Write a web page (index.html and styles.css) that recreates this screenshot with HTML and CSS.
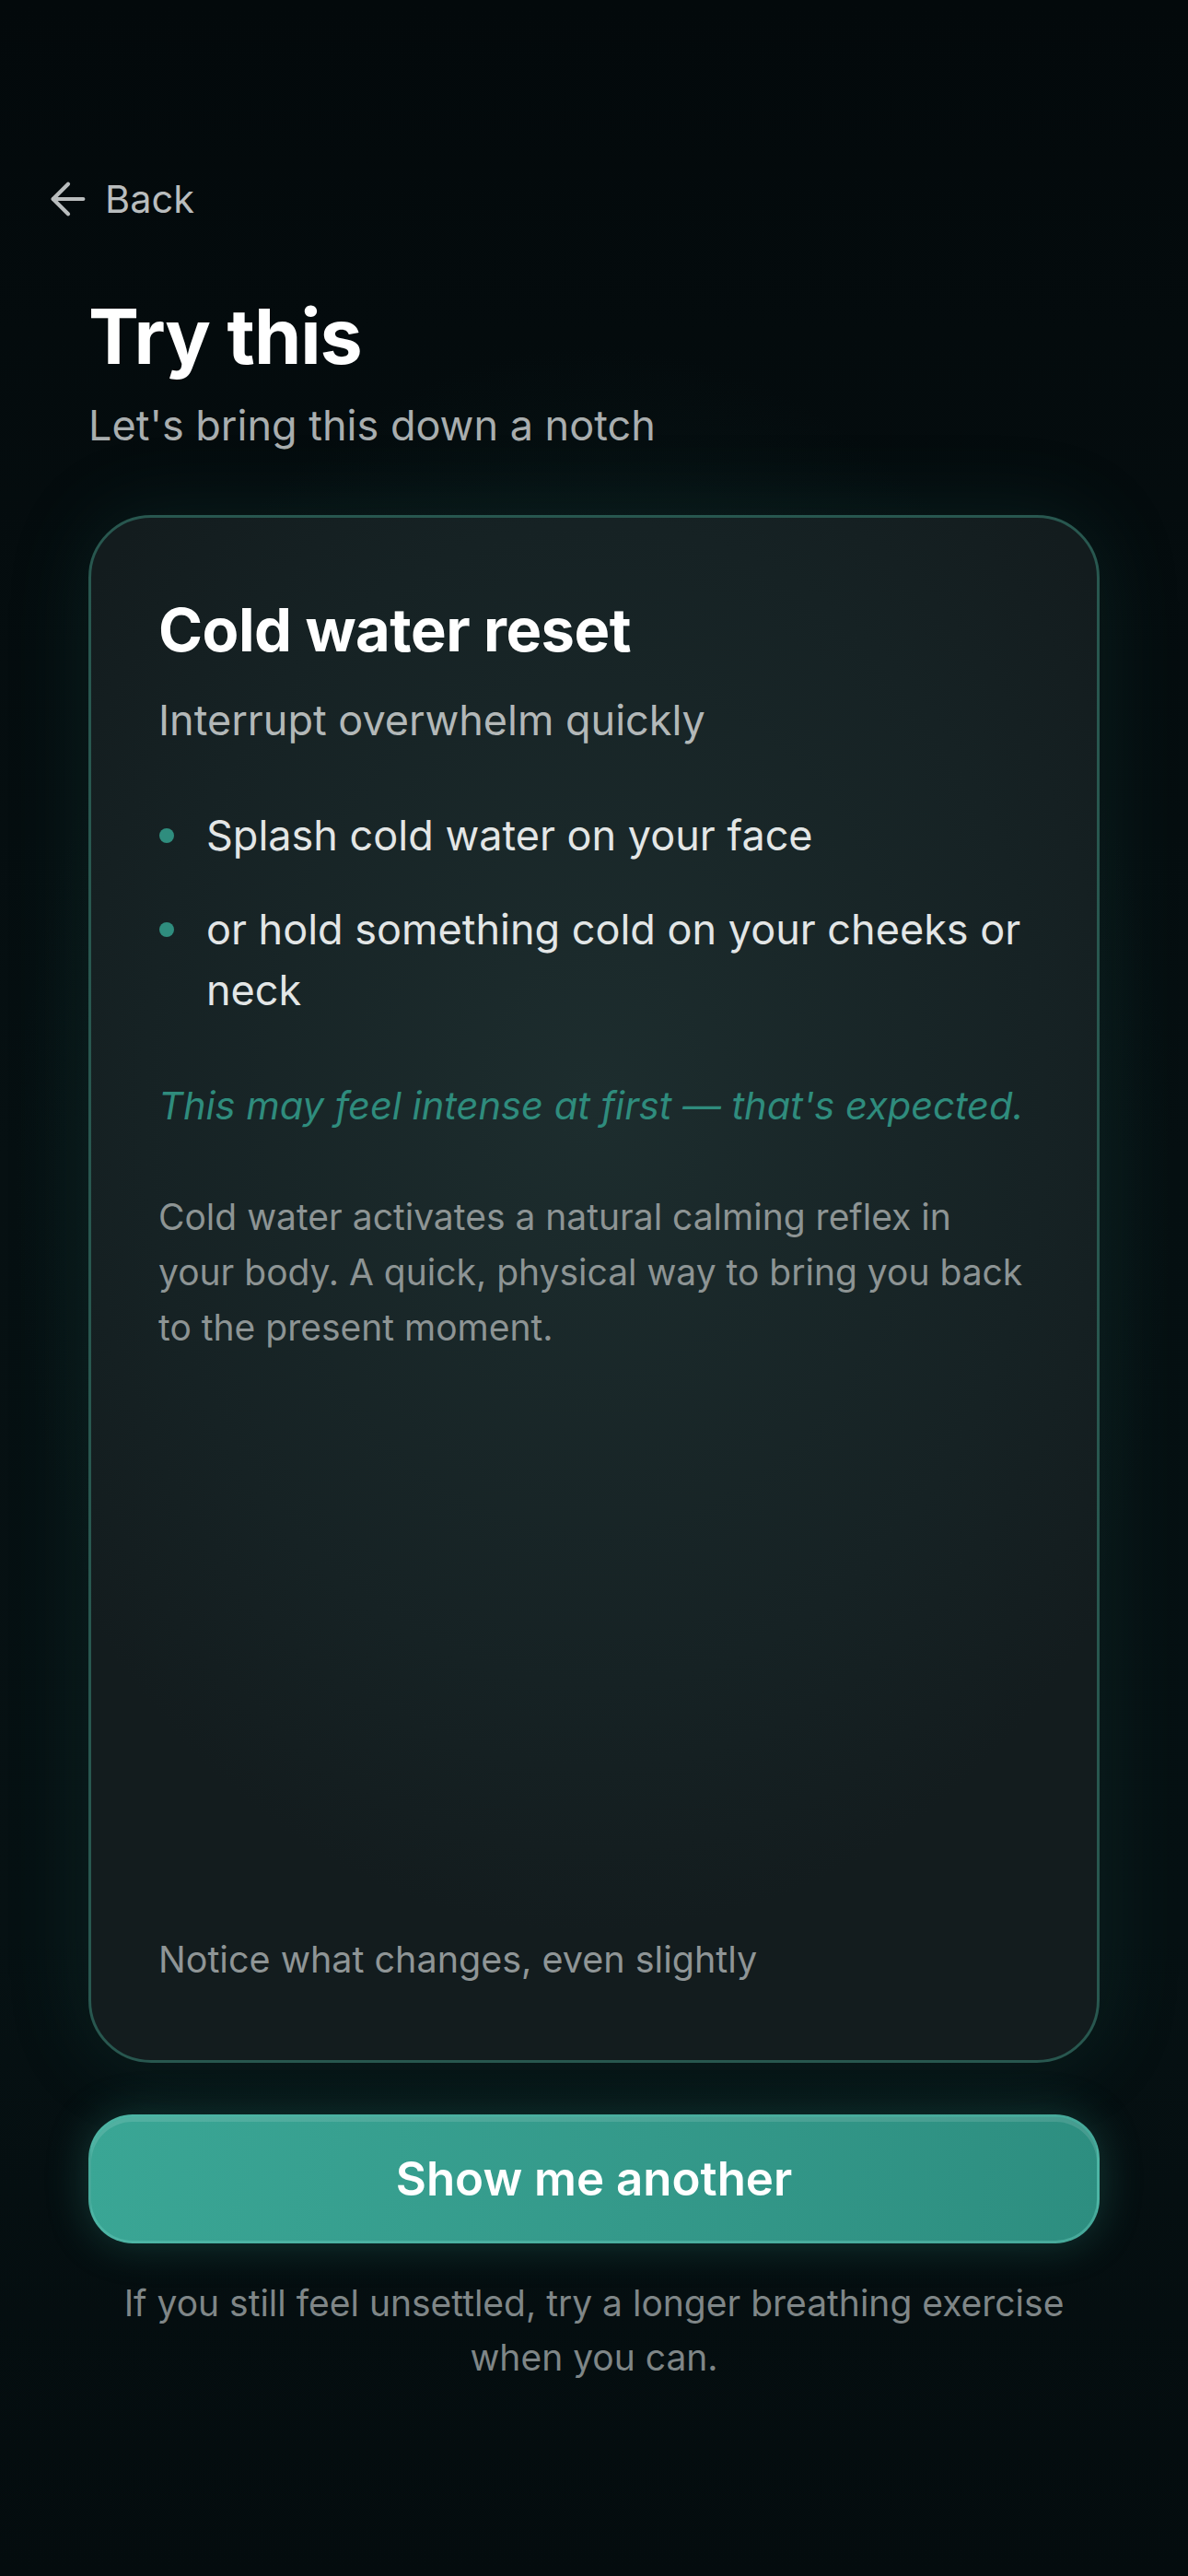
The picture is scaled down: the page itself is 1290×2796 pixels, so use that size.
FILE: index.html
```html
<!DOCTYPE html>
<html lang="en">
<head>
    <meta charset="utf-8">
    <title>Try this</title>
    <link rel="stylesheet" href="styles.css">
</head>
<body>

<div class="screen">
    <a class="back" href="#">
        <svg class="back-icon" viewBox="0 0 24 24" fill="none" stroke="currentColor" stroke-width="1.8" stroke-linecap="round" stroke-linejoin="round">
            <path d="M19 12H5"/>
            <path d="M12 19l-7-7 7-7"/>
        </svg>
        <span>Back</span>
    </a>

    <main class="content">
        <h1 class="title">Try this</h1>
        <p class="subtitle">Let's bring this down a notch</p>

        <section class="card">
            <h2 class="card-title">Cold water reset</h2>
            <p class="card-sub">Interrupt overwhelm quickly</p>

            <ul class="steps">
                <li>Splash cold water on your face</li>
                <li>or hold something cold on your cheeks or neck</li>
            </ul>

            <p class="note">This may feel intense at first — that's expected.</p>

            <p class="why">Cold water activates a natural calming reflex in your body. A quick, physical way to bring you back to the present moment.</p>

            <p class="notice">Notice what changes, even slightly</p>
        </section>

        <button class="another">Show me another</button>

        <p class="hint">If you still feel unsettled, try a longer breathing exercise when you can.</p>
    </main>
</div>

</body>
</html>
```

FILE: styles.css
```css
* {
    box-sizing: border-box;
}
html, body {
    margin: 0;
    padding: 0;
}
body {
    min-height: 2796px;
    background:
        radial-gradient(ellipse 900px 1300px at 50% 46%, rgba(24, 60, 58, 0.55), rgba(10, 24, 26, 0) 70%),
        linear-gradient(180deg, #03090b 0%, #061012 45%, #061113 75%, #040c0e 100%);
    font-family: Inter, 'Noto Sans', sans-serif;
    color: #fff;
}
.screen {
    padding-top: 190px;
}
.back {
    display: flex;
    align-items: center;
    gap: 12px;
    padding-left: 46px;
    height: 52px;
    color: #b9bdbe;
    text-decoration: none;
    font-size: 41.5px;
    line-height: 52px;
}
.back-icon {
    width: 56px;
    height: 56px;
}
.content {
    display: flex;
    flex-direction: column;
    padding: 0 96px;
}
.title {
    margin: 73px 0 0;
    font-size: 82.5px;
    font-weight: 700;
    line-height: 101px;
    letter-spacing: -1px;
}
.subtitle {
    margin: 17px 0 0;
    font-size: 45px;
    line-height: 57px;
    color: #a9aeaf;
}
.card {
    display: flex;
    flex-direction: column;
    height: 1680px;
    margin-top: 69px;
    padding: 83px 69px 81px 73px;
    border: 3px solid #28574f;
    border-radius: 68px;
    background:
        radial-gradient(ellipse 700px 900px at 50% 38%, #1d2d2e, #162224 70%, #131c1e 100%);
    box-shadow: 0 0 90px rgba(40, 120, 108, 0.17);
}
.card-title {
    margin: 0;
    font-size: 65px;
    font-weight: 700;
    line-height: 77px;
    letter-spacing: -0.5px;
}
.card-sub {
    margin: 33px 0 0;
    font-size: 45px;
    line-height: 54px;
    color: #b3b8b8;
}
.steps {
    list-style: none;
    margin: 65px 0 0;
    padding: 0;
    display: flex;
    flex-direction: column;
    gap: 36px;
}
.steps li {
    position: relative;
    padding-left: 52px;
    font-size: 45px;
    line-height: 66px;
    color: #e3e6e6;
}
.steps li::before {
    content: "";
    position: absolute;
    left: 1px;
    top: 25px;
    width: 16px;
    height: 16px;
    border-radius: 50%;
    background: #2f8d7e;
}
.note {
    margin: 63px 0 0;
    font-size: 41.6px;
    font-style: italic;
    line-height: 58px;
    color: #2f8c7d;
    white-space: nowrap;
}
.why {
    margin: 62px 0 0;
    font-size: 39px;
    line-height: 60px;
    color: #8d9494;
}
.notice {
    margin: auto 0 0;
    font-size: 39.5px;
    line-height: 55px;
    color: #8f9596;
}
.another {
    height: 140px;
    margin-top: 56px;
    border: 3px solid rgba(96, 196, 180, 0.5);
    border-radius: 48px;
    background: linear-gradient(100deg, #3aa695 0%, #34998a 55%, #2d8e80 100%);
    box-shadow: 0 0 46px rgba(52, 160, 142, 0.3),
                inset 0 5px 0 rgba(255, 255, 255, 0.12);
    color: #fff;
    font-family: inherit;
    font-size: 51px;
    font-weight: 600;
    line-height: 1;
    padding-bottom: 2px;
    cursor: pointer;
}
.hint {
    margin: 35px 20px 0;
    font-size: 39px;
    line-height: 59px;
    text-align: center;
    color: #7f8687;
}
```
